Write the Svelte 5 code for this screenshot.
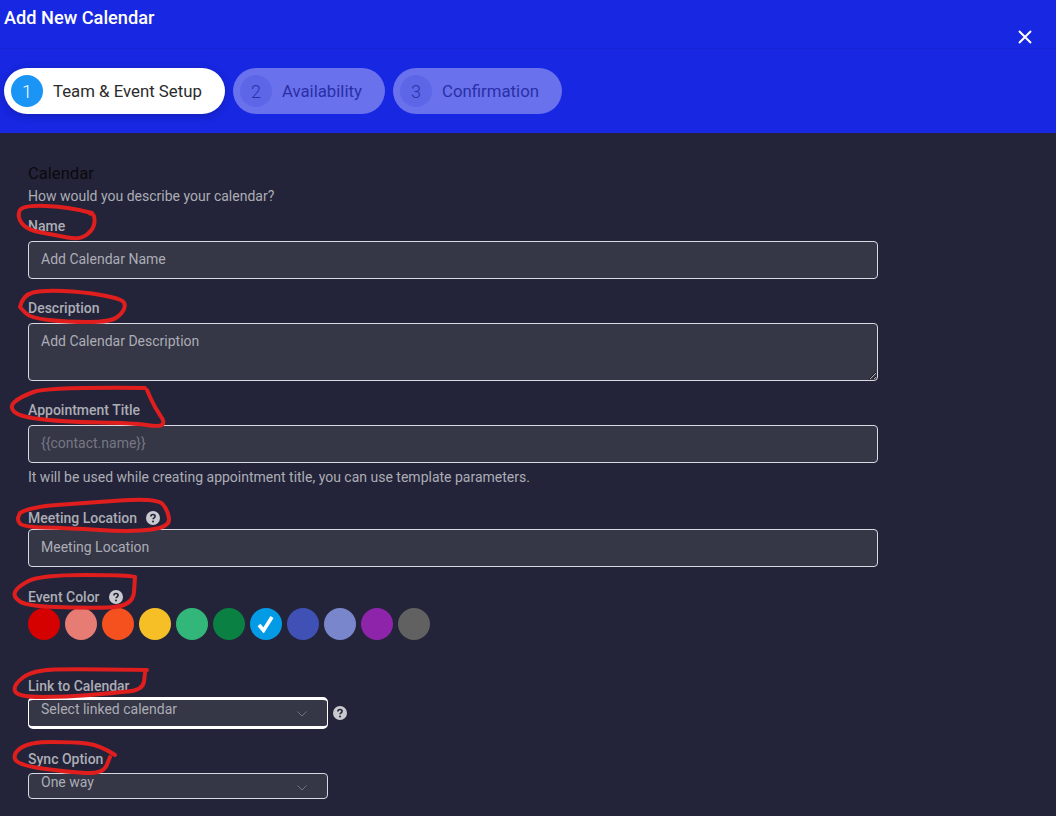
<script>
  const steps = [
    { n: 1, label: 'Team & Event Setup', active: true },
    { n: 2, label: 'Availability' },
    { n: 3, label: 'Confirmation' },
  ]
  const colors = ['#d50000', '#e67c73', '#f4511e', '#f6bf26', '#33b679', '#0b8043', '#039be5', '#3f51b5', '#7986cb', '#8e24aa', '#616161']

  // hand-drawn red marks on top of the screenshot
  const scribbles = [
    [[92,213],[70,207],[22,205],[17,217],[27,230],[55,235],[80,240],[94,229],[95,215],[89,213]],
    [[20,307],[23,295],[43,290],[83,292],[113,297],[126,302],[123,313],[110,322],[67,322],[30,318],[20,307]],
    [[145,388],[47,387],[20,397],[9,407],[20,417],[67,422],[133,423],[160,427],[165,422],[155,408],[147,390]],
    [[20,513],[30,507],[83,503],[157,498],[168,510],[170,527],[133,532],[67,528],[23,527],[17,520],[20,513]],
    [[135,577],[130,575],[40,575],[17,587],[13,597],[27,606],[83,608],[133,607],[135,577]],
    [[147,670],[77,669],[33,670],[13,685],[17,697],[67,697],[113,693],[143,690],[145,673]],
    [[115,755],[100,745],[73,742],[30,742],[13,753],[17,765],[67,772],[103,774],[110,757]],
  ]

  function smooth(pts) {
    let d = `M${pts[0][0]} ${pts[0][1]}`
    for (let i = 1; i < pts.length - 1; i++) {
      const mx = (pts[i][0] + pts[i + 1][0]) / 2
      const my = (pts[i][1] + pts[i + 1][1]) / 2
      d += ` Q${pts[i][0]} ${pts[i][1]} ${mx} ${my}`
    }
    const last = pts[pts.length - 1]
    return d + ` L${last[0]} ${last[1]}`
  }
</script>

{#snippet help()}
  <svg class="help" viewBox="0 0 14 14" width="14" height="14" aria-hidden="true">
    <circle cx="7" cy="7" r="7" fill="currentColor" />
    <path d="M4.9 5.4c0-1.2 1-1.9 2.1-1.9s2.1.7 2.1 1.8c0 1.6-2 1.5-2 3" fill="none" stroke="#232439" stroke-width="1.6" />
    <circle cx="7" cy="10.6" r="1" fill="#232439" />
  </svg>
{/snippet}

{#snippet chevron()}
  <svg class="chevron" viewBox="0 0 10 6" width="10" height="6" aria-hidden="true">
    <path d="M.5.5 5 5 9.5.5" fill="none" stroke="#6b7280" stroke-width="1" />
  </svg>
{/snippet}

<div class="page">
  <header>
    <div class="top">
      <h1>Add New Calendar</h1>
      <svg class="close" viewBox="0 0 14 14" width="14" height="14" aria-hidden="true">
        <path d="M1 1l12 12M13 1 1 13" stroke="#fff" stroke-width="2" />
      </svg>
    </div>
    <div class="steps">
      {#each steps as step}
        <div class="step" class:active={step.active}>
          <span class="num">{step.n}</span>
          <span>{step.label}</span>
        </div>
      {/each}
    </div>
  </header>

  <main>
    <h2>Calendar</h2>
    <p class="sub">How would you describe your calendar?</p>

    <label class="name-label" for="name">Name</label>
    <input id="name" placeholder="Add Calendar Name" />

    <label class="desc-label" for="desc">Description</label>
    <textarea id="desc" placeholder="Add Calendar Description"></textarea>

    <label class="title-label" for="title">Appointment Title</label>
    <input id="title" class="dim" placeholder={'{{contact.name}}'} />
    <p class="hint">It will be used while creating appointment title, you can use template parameters.</p>

    <label class="loc-label" for="loc">Meeting Location {@render help()}</label>
    <input id="loc" placeholder="Meeting Location" />

    <div class="label color-label">Event Color {@render help()}</div>
    <div class="colors">
      {#each colors as c, i}
        <span class="dot" style:background={c}>
          {#if i === 6}
            <svg viewBox="0 0 18 18" width="18" height="18" aria-hidden="true">
              <path d="M2 10 6.5 15.5 15 2" fill="none" stroke="#fff" stroke-width="3.6" />
            </svg>
          {/if}
        </span>
      {/each}
    </div>

    <div class="label link-label">Link to Calendar</div>
    <div class="select-row">
      <div class="select focus">Select linked calendar {@render chevron()}</div>
      {@render help()}
    </div>

    <div class="label sync-label">Sync Option</div>
    <div class="select short">One way {@render chevron()}</div>
  </main>

  <svg class="marks" viewBox="0 0 1056 816" width="1056" height="816" aria-hidden="true">
    {#each scribbles as pts}
      <path d={smooth(pts)} fill="none" stroke="#e01e1e" stroke-width="4" stroke-linecap="round" stroke-linejoin="round" />
    {/each}
  </svg>
</div>

<style>
  :global(body) {
    margin: 0;
    background: #232439;
    overflow: hidden;
  }

  .page {
    position: relative;
    width: 1056px;
    height: 816px;
    overflow: hidden;
    font-family: Roboto, 'Liberation Sans', sans-serif;
    font-size: 14px;
    color: #acadb5;
  }

  header {
    height: 133px;
    background: #1727e2;
  }
  .top {
    display: flex;
    justify-content: space-between;
    height: 49px;
    padding: 7px 24px 0 4px;
    box-sizing: border-box;
    border-bottom: 1px solid #1624d6;
  }
  h1 {
    margin: 0;
    font-size: 18.2px;
    line-height: 21px;
    font-weight: 500;
    color: #fff;
  }
  .close {
    margin-top: 23px;
  }
  .steps {
    display: flex;
    gap: 8px;
    padding: 19px 0 0 4px;
  }
  .step {
    display: flex;
    align-items: center;
    gap: 10px;
    height: 46px;
    padding: 0 23px 0 7px;
    border-radius: 23px;
    background: #6971ec;
    color: #2a2fa8;
    font-size: 16.8px;
  }
  .step.active {
    background: #fff;
    color: #2b2b2b;
    box-shadow: 0 2px 8px rgba(0, 0, 0, 0.2);
  }
  .num {
    display: flex;
    align-items: center;
    justify-content: center;
    width: 32px;
    height: 32px;
    border-radius: 50%;
    background: #5e66e8;
    font-size: 18px;
    font-weight: 300;
  }
  .active .num {
    background: #1a94f5;
    color: #fff;
  }

  main {
    display: flex;
    flex-direction: column;
    align-items: flex-start;
    padding: 31px 0 0 28px;
  }
  h2 {
    margin: 0;
    font-size: 16.6px;
    line-height: 19px;
    font-weight: 400;
    color: #0a0a0e;
  }
  .sub {
    margin: 3px 0 0;
    line-height: 20px;
  }
  label,
  .label {
    display: flex;
    align-items: center;
    gap: 9px;
    height: 18px;
    font-weight: 500;
    font-size: 14px;
    color: #acadb5;
  }
  .name-label { margin-top: 11px; }
  .desc-label { margin-top: 20px; }
  .title-label { margin-top: 20px; }
  .loc-label { margin-top: 22px; }
  .color-label { margin-top: 21px; }
  .link-label { margin-top: 37px; }
  .sync-label { margin-top: 21px; }

  input,
  textarea {
    display: block;
    width: 850px;
    height: 38px;
    margin-top: 6px;
    padding: 0 12px 2px;
    box-sizing: border-box;
    background: #353646;
    border: 1px solid #d8d9e0;
    border-radius: 4px;
    outline: none;
    font: inherit;
    color: #acadb5;
  }
  textarea {
    height: 58px;
    padding-top: 8px;
    line-height: 18px;
    resize: vertical;
  }
  input::placeholder,
  textarea::placeholder {
    color: #acadb5;
    opacity: 1;
  }
  input.dim::placeholder {
    color: #777884;
  }
  #loc { margin-top: 2px; }

  .hint {
    margin: 4px 0 0;
    line-height: 20px;
  }

  .colors {
    display: flex;
    gap: 5px;
    margin-top: 2px;
  }
  .dot {
    display: flex;
    align-items: center;
    justify-content: center;
    width: 32px;
    height: 32px;
    border-radius: 50%;
  }

  .select-row {
    display: flex;
    align-items: center;
    gap: 5px;
    margin-top: 2px;
  }
  .select {
    position: relative;
    width: 300px;
    height: 26px;
    padding: 0 12px;
    box-sizing: border-box;
    background: #353646;
    border: 1px solid #d8d9e0;
    border-radius: 4px;
    line-height: 16px;
    color: #acadb5;
  }
  .select.focus {
    height: 32px;
    border-width: 3px 1px;
    border-color: #fff;
    border-radius: 5px;
    line-height: 18px;
  }
  .select.short {
    margin-top: 5px;
  }
  .chevron {
    position: absolute;
    right: 20px;
    top: 11px;
  }
  .help {
    flex: none;
    color: #c9cad0;
  }

  .marks {
    position: absolute;
    left: 0;
    top: 0;
    pointer-events: none;
  }
</style>
